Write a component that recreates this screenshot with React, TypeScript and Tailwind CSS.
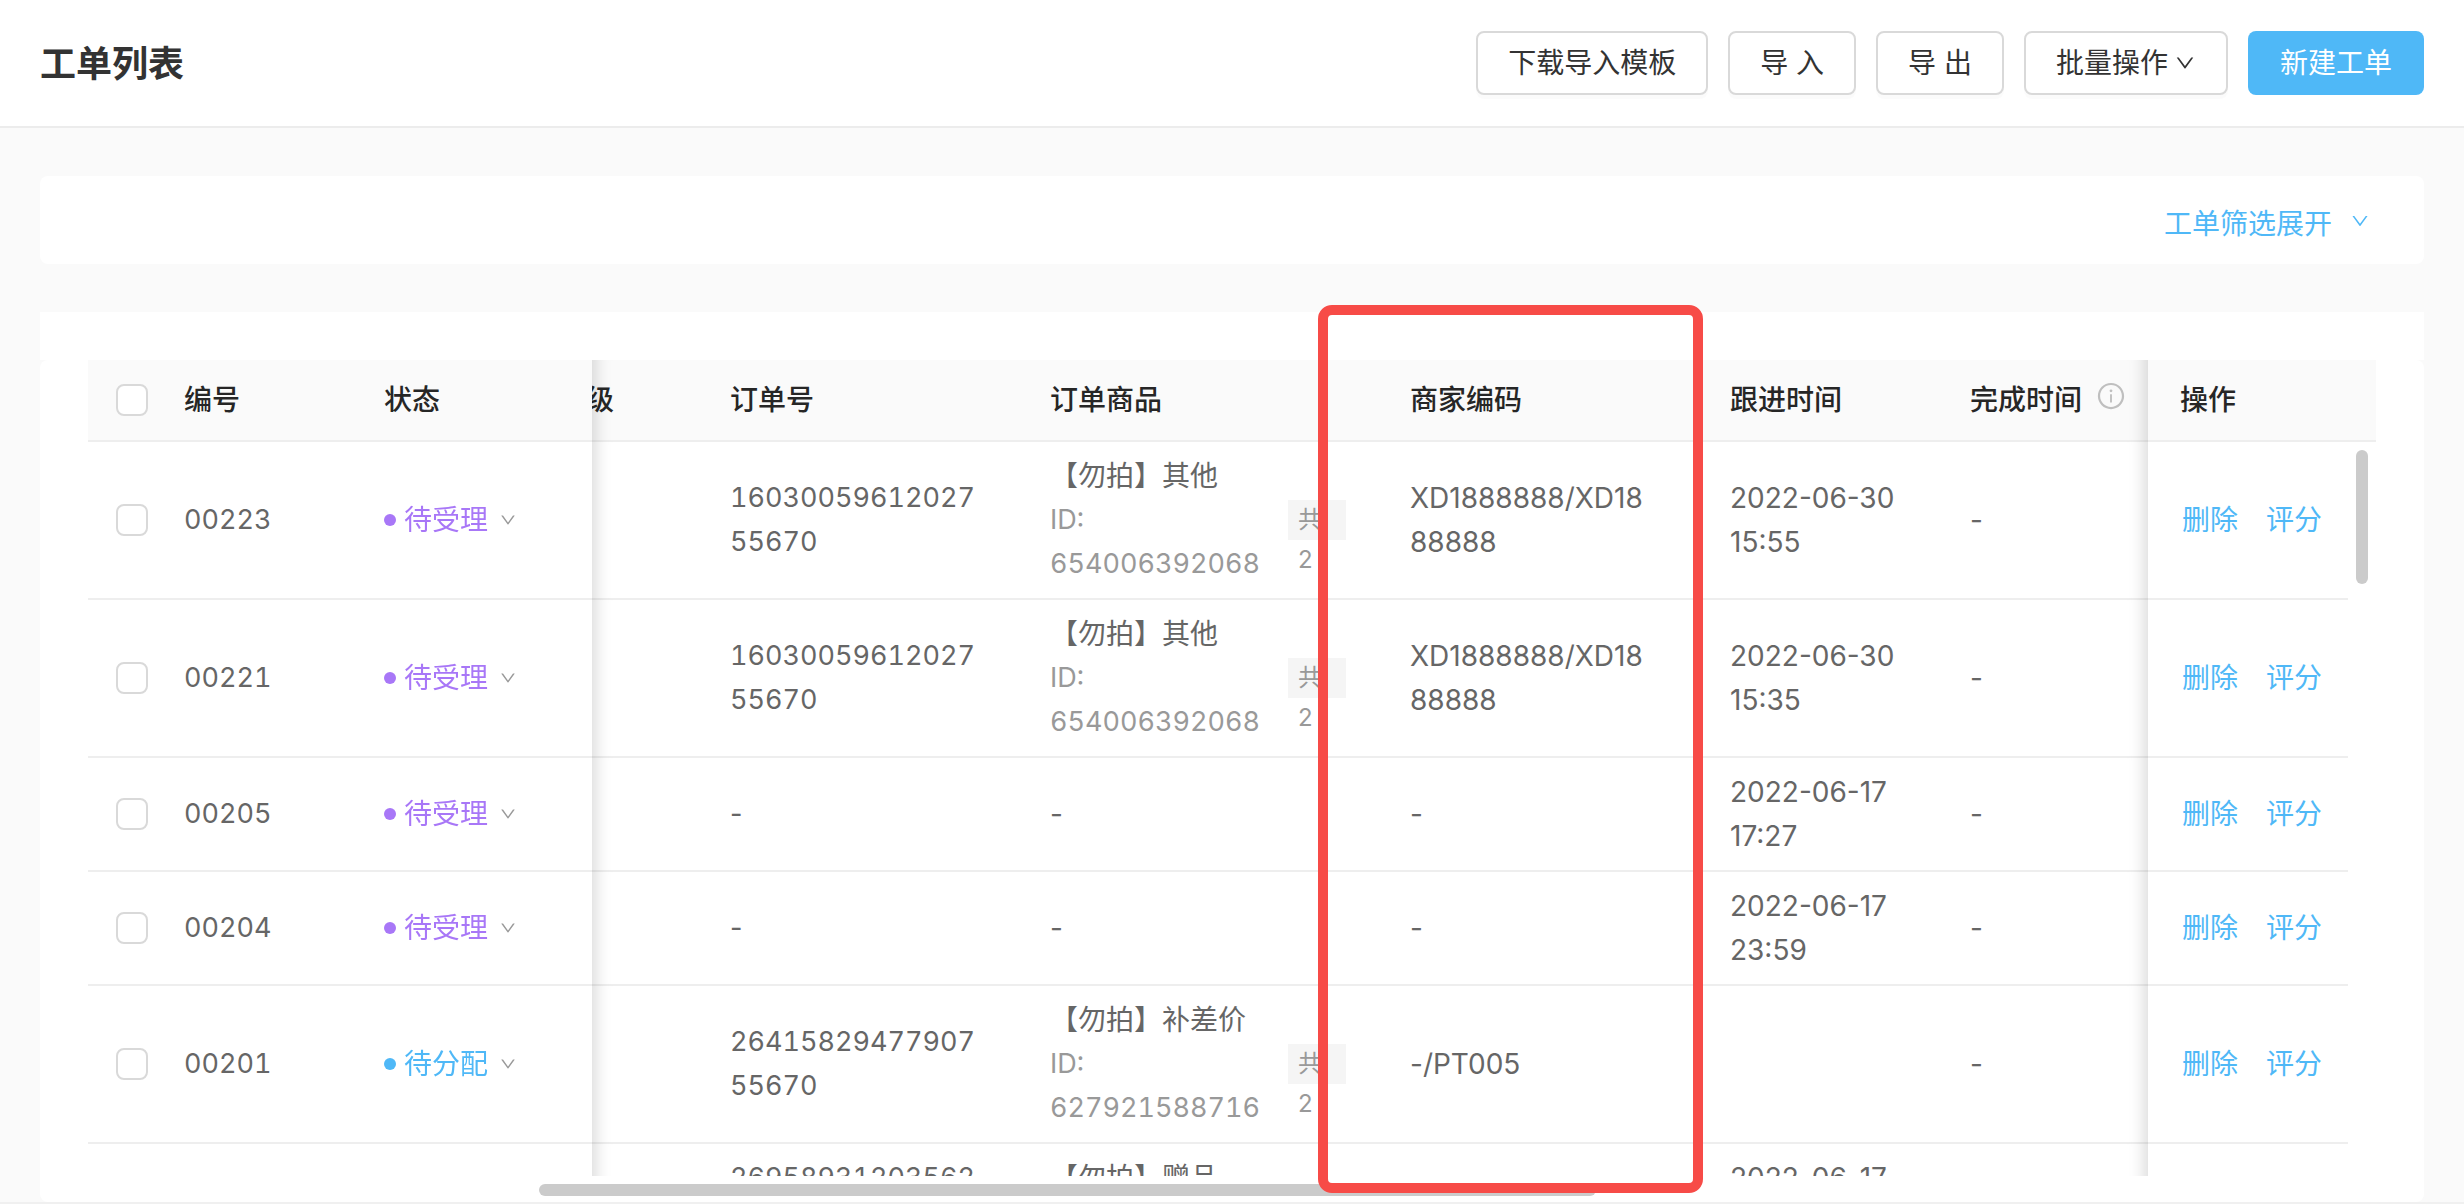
import { AiOutlineDown, AiOutlineInfoCircle } from 'react-icons/ai'

type Order = {
  id: string
  status?: string
  tone?: 'purple' | 'blue'
  orderNo: string
  goods?: { title: string; goodsId: string }
  code: string
  followed: string
  finished: string
  top?: boolean
}

const orders: Order[] = [
  { id: '00223', status: '待受理', tone: 'purple', orderNo: '1603005961202755670', goods: { title: '【勿拍】其他', goodsId: '654006392068' }, code: 'XD1888888/XD1888888', followed: '2022-06-30 15:55', finished: '-' },
  { id: '00221', status: '待受理', tone: 'purple', orderNo: '1603005961202755670', goods: { title: '【勿拍】其他', goodsId: '654006392068' }, code: 'XD1888888/XD1888888', followed: '2022-06-30 15:35', finished: '-' },
  { id: '00205', status: '待受理', tone: 'purple', orderNo: '-', code: '-', followed: '2022-06-17 17:27', finished: '-' },
  { id: '00204', status: '待受理', tone: 'purple', orderNo: '-', code: '-', followed: '2022-06-17 23:59', finished: '-' },
  { id: '00201', status: '待分配', tone: 'blue', orderNo: '2641582947790755670', goods: { title: '【勿拍】补差价', goodsId: '627921588716' }, code: '-/PT005', followed: '', finished: '-' },
  { id: '', orderNo: '26958931203562', goods: { title: '【勿拍】赠品', goodsId: '' }, code: '', followed: '2022-06-17', finished: '', top: true },
]

const th = 'sticky top-0 h-[82px] border-b-2 border-[#eeeeee] bg-[#fafafa] px-4 text-left font-medium text-[#262626]'
const td = 'border-b-2 border-[#eeeeee] px-4 py-3'
const shadowRight = "after:pointer-events-none after:absolute after:top-0 after:-bottom-[2px] after:left-full after:w-[60px] after:shadow-[inset_20px_0_16px_-16px_rgba(0,0,0,0.15)] after:content-['']"
const shadowLeft = "after:pointer-events-none after:absolute after:top-0 after:-bottom-[2px] after:right-full after:w-[60px] after:shadow-[inset_-20px_0_16px_-16px_rgba(0,0,0,0.15)] after:content-['']"
const button = 'flex h-16 items-center rounded-lg border-2 border-[#d9d9d9] bg-white px-[30px] text-[#333333] shadow-[0_4px_0_rgba(0,0,0,0.015)]'

const Checkbox = ({ label }: { label: string }) => (
  <input
    type="checkbox"
    aria-label={label}
    className="block size-8 appearance-none rounded-lg border-2 border-[#d9d9d9] bg-white"
  />
)

const Row = ({ order }: { order: Order }) => (
  <tr className={order.top ? 'align-top' : 'align-middle'}>
    <td className="border-b-2 border-[#eeeeee] py-3 pl-7">
      {order.id && <Checkbox label={order.id} />}
    </td>
    <td className={`${td} text-[27px] tabular-nums`}>{order.id}</td>
    <td className={`${td} relative ${shadowRight}`}>
      {order.status && (
        <button
          type="button"
          className={`flex items-center ${order.tone === 'purple' ? 'text-[#a877f7]' : 'text-[#4fb8f7]'}`}
        >
          <span className="mr-2 size-3 rounded-full bg-current" />
          {order.status}
          <AiOutlineDown className="ml-[11px] size-[18px] text-[#999999]" />
        </button>
      )}
    </td>
    <td className={td} />
    <td className={`${td} text-[27px]`}>
      <div className={`max-w-[256px] break-all ${order.orderNo === '-' ? '' : 'tabular-nums'}`}>{order.orderNo}</div>
    </td>
    <td className={td}>
      {order.goods ? (
        <div className="flex h-[132px] items-center justify-between">
          <div className="h-full w-[224px]">
            <p className="whitespace-nowrap">{order.goods.title}</p>
            {order.goods.goodsId && (
              <p className="text-[27px] text-[#999999] tabular-nums">ID: {order.goods.goodsId}</p>
            )}
          </div>
          {order.goods.goodsId && (
            <div className="mr-8 h-10 w-[58px] bg-[#f5f5f5] px-[10px] text-2xl leading-10 text-[#999999]">
              共<br />2
            </div>
          )}
        </div>
      ) : (
        '-'
      )}
    </td>
    <td className={td}>
      <div className="max-w-[244px] break-all">{order.code}</div>
    </td>
    <td className={td}>{order.followed}</td>
    <td className={td}>{order.finished}</td>
    <td className={`${td} relative bg-white ${shadowLeft}`}>
      {order.id && (
        <div className="flex gap-7 pl-[18px] text-[#4fb8f7]">
          <a href="#delete">删除</a>
          <a href="#rate">评分</a>
        </div>
      )}
    </td>
    <td />
  </tr>
)

const App: React.FC = () => {
  return (
    <div className="flex h-screen flex-col bg-[#fafafa] font-['Inter','Noto_Sans_CJK_SC',sans-serif] text-[28px] leading-[44px] text-[#666666]">
      <header className="flex h-32 shrink-0 items-center justify-between border-b-2 border-[#ececec] bg-white px-10">
        <h1 className="pt-[2px] text-4xl font-bold text-[#333333]">工单列表</h1>
        <div className="flex gap-5">
          <button type="button" className={button}>下载导入模板</button>
          <button type="button" className={button}>导 入</button>
          <button type="button" className={button}>导 出</button>
          <button type="button" className={button}>
            批量操作
            <AiOutlineDown className="ml-[6px] size-[22px]" />
          </button>
          <button type="button" className="h-16 rounded-lg bg-[#4fb8f7] px-8 text-white">新建工单</button>
        </div>
      </header>

      <main className="flex min-h-0 flex-1 flex-col px-10 pt-12">
        <div className="flex h-[88px] shrink-0 items-center justify-end rounded-lg bg-white px-[54px]">
          <button type="button" className="flex items-center pt-2 text-[#4fb8f7]">
            工单筛选展开
            <AiOutlineDown className="mb-[6px] ml-[18px] size-5" />
          </button>
        </div>

        <section className="relative mt-12 flex min-h-0 flex-1 flex-col">
          <div className="h-12 shrink-0 bg-white" />
          <div className="relative flex min-h-0 flex-1 flex-col rounded-lg bg-white px-12">
            <div className="min-h-0 flex-1 overflow-x-hidden overflow-y-auto [scrollbar-width:none]">
              <table className="w-full table-fixed border-separate border-spacing-0">
                <colgroup>
                  <col className="w-[80px]" />
                  <col className="w-[200px]" />
                  <col className="w-[224px]" />
                  <col className="w-[122px]" />
                  <col className="w-[320px]" />
                  <col />
                  <col className="w-[320px]" />
                  <col className="w-[240px]" />
                  <col className="w-[194px]" />
                  <col className="w-[200px]" />
                  <col className="w-[28px]" />
                </colgroup>
                <thead>
                  <tr>
                    <th className="sticky top-0 border-b-2 border-[#eeeeee] bg-[#fafafa] pl-7">
                      <Checkbox label="全选" />
                    </th>
                    <th className={th}>编号</th>
                    <th className={`${th} z-10 ${shadowRight}`}>状态</th>
                    <th className="sticky top-0 border-b-2 border-[#eeeeee] bg-[#fafafa] text-left font-medium text-[#262626]">
                      <div className="flex w-[22px] justify-end overflow-hidden">
                        <span className="shrink-0">级</span>
                      </div>
                    </th>
                    <th className={th}>订单号</th>
                    <th className={th}>订单商品</th>
                    <th className={th}>商家编码</th>
                    <th className={th}>跟进时间</th>
                    <th className={th}>
                      <div className="flex whitespace-nowrap">
                        完成时间
                        <AiOutlineInfoCircle className="mt-[3px] ml-[14px] size-[30px] shrink-0 text-[#bfbfbf]" />
                      </div>
                    </th>
                    <th className={`${th} z-10 ${shadowLeft}`}>
                      <div className="pl-4">操作</div>
                    </th>
                    <th className="sticky top-0 border-b-2 border-[#eeeeee] bg-[#fafafa]" />
                  </tr>
                </thead>
                <tbody>
                  {orders.map((order, i) => (
                    <Row key={i} order={order} />
                  ))}
                </tbody>
              </table>
            </div>
            <div className="mt-2 mb-[6px] ml-[451px] h-3 w-[1057px] shrink-0 rounded-full bg-[#cbcbcb]" />
            <div className="absolute top-[90px] right-14 h-[134px] w-3 rounded-full bg-[#cbcbcb]" />
          </div>

          {/* highlight round the merchant code column */}
          <div className="pointer-events-none absolute -top-[7px] right-[721px] bottom-[9px] z-20 w-[385px] rounded-[14px] border-10 border-[#f74b47]" />
        </section>
      </main>
      <footer className="h-[2px] shrink-0 bg-[#f0f0f0]" />
    </div>
  )
}

export default App
